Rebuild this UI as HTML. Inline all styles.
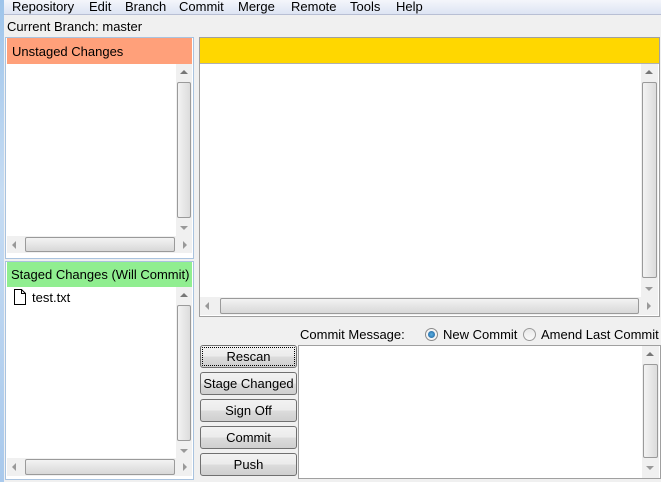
<!DOCTYPE html>
<html><head><style>
*{box-sizing:border-box;margin:0;padding:0}
body{width:661px;height:482px;background:#f0f0f0;font-family:"Liberation Sans","DejaVu Sans",sans-serif;font-size:13px;color:#000;position:relative;overflow:hidden}
.a{position:absolute}
.menu{left:4px;top:0;width:657px;height:15px;background:linear-gradient(#f4f6fb,#dde4f3);border-bottom:1px solid #b8bfd4}
.menu span{position:absolute;top:-1px}
.vs{background:#f0f0f0}
.thumbv{position:absolute;left:1px;right:1px;border:1px solid #9a9a9a;border-radius:2px;background:linear-gradient(90deg,#f3f3f3,#dcdcdc)}
.thumbh{position:absolute;top:1px;bottom:1px;border:1px solid #9a9a9a;border-radius:2px;background:linear-gradient(#f3f3f3,#d8d8d8)}
.arr{position:absolute;width:0;height:0}
.btn{position:absolute;left:200px;width:97px;height:23px;border:1px solid #707070;border-radius:3px;background:linear-gradient(#f2f2f2 0%,#ebebeb 50%,#dcdcdc 51%,#cfcfcf 100%);text-align:center;line-height:22px}
</style></head><body>
<div class="a" style="left:0;top:0;width:4px;height:482px;background:linear-gradient(#9ec4ea,#c6dcf3 40%,#a9c9ec)"></div>
<div class="a menu">
<span style="left:8px">Repository</span><span style="left:85px">Edit</span><span style="left:121px">Branch</span><span style="left:175px">Commit</span><span style="left:234px">Merge</span><span style="left:287px">Remote</span><span style="left:346px">Tools</span><span style="left:392px">Help</span>
</div>
<div class="a" style="left:7px;top:19px">Current Branch: master</div>

<div class="a" style="left:5px;top:37px;width:189px;height:222px;border:1px solid #a9c3df;background:#fff"></div>
<div class="a" style="left:7px;top:38px;width:185px;height:26px;background:#ffa07a;padding:6px 0 0 5px">Unstaged Changes</div>
<div class="a vs" style="left:176px;top:64px;width:16px;height:172px">
<div class="arr" style="left:4px;top:6px;border:4px solid transparent;border-bottom:4px solid #777;border-top:0"></div>
<div class="thumbv" style="top:18px;height:136px"></div>
<div class="arr" style="left:4px;top:162px;border:4px solid transparent;border-top:4px solid #999;border-bottom:0"></div>
</div>
<div class="a vs" style="left:7px;top:236px;width:185px;height:17px">
<div class="arr" style="left:5px;top:5px;border:4px solid transparent;border-right:4px solid #999;border-left:0"></div>
<div class="thumbh" style="left:18px;width:150px"></div>
<div class="arr" style="left:176px;top:5px;border:4px solid transparent;border-left:4px solid #999;border-right:0"></div>
</div>

<div class="a" style="left:5px;top:261px;width:189px;height:219px;border:1px solid #a9c3df;background:#fff"></div>
<div class="a" style="left:7px;top:262px;width:185px;height:25px;background:#90ee90;padding:5px 0 0 4px">Staged Changes (Will Commit)</div>
<svg class="a" style="left:13px;top:289px" width="14" height="16" viewBox="0 0 14 16"><path d="M1.5 .5h7l4 4v11h-11z M8.5 .5v4h4" fill="#fff" stroke="#000"/></svg>
<div class="a" style="left:32px;top:290px">test.txt</div>
<div class="a vs" style="left:176px;top:287px;width:16px;height:171px">
<div class="arr" style="left:4px;top:6px;border:4px solid transparent;border-bottom:4px solid #777;border-top:0"></div>
<div class="thumbv" style="top:18px;height:136px"></div>
<div class="arr" style="left:4px;top:162px;border:4px solid transparent;border-top:4px solid #999;border-bottom:0"></div>
</div>
<div class="a vs" style="left:7px;top:458px;width:185px;height:18px">
<div class="arr" style="left:5px;top:5px;border:4px solid transparent;border-right:4px solid #999;border-left:0"></div>
<div class="thumbh" style="left:18px;width:150px"></div>
<div class="arr" style="left:176px;top:5px;border:4px solid transparent;border-left:4px solid #999;border-right:0"></div>
</div>

<div class="a" style="left:199px;top:37px;width:461px;height:280px;border:1px solid #a0a0a0;background:#fff"></div>
<div class="a" style="left:200px;top:38px;width:459px;height:26px;background:#ffd700;border-bottom:1px solid #b0b0b0"></div>
<div class="a vs" style="left:641px;top:64px;width:17px;height:234px">
<div class="arr" style="left:4px;top:6px;border:4px solid transparent;border-bottom:4px solid #777;border-top:0"></div>
<div class="thumbv" style="top:18px;height:196px"></div>
<div class="arr" style="left:4px;top:223px;border:4px solid transparent;border-top:4px solid #999;border-bottom:0"></div>
</div>
<div class="a vs" style="left:200px;top:297px;width:441px;height:18px">
<div class="arr" style="left:5px;top:5px;border:4px solid transparent;border-right:4px solid #999;border-left:0"></div>
<div class="thumbh" style="left:20px;width:419px"></div>
</div>
<div class="a vs" style="left:641px;top:297px;width:17px;height:18px">
<div class="arr" style="left:6px;top:5px;border:4px solid transparent;border-left:4px solid #999;border-right:0"></div>
</div>

<div class="a" style="left:300px;top:327px">Commit Message:</div>
<div class="a" style="left:425px;top:328px;width:13px;height:13px;border-radius:50%;border:1px solid #8a8a8a;background:#f4f4f4"><div style="position:absolute;left:2px;top:2px;width:7px;height:7px;border-radius:50%;background:radial-gradient(#5ab0e0,#1a5b9a)"></div></div>
<div class="a" style="left:443px;top:327px">New Commit</div>
<div class="a" style="left:523px;top:328px;width:13px;height:13px;border-radius:50%;border:1px solid #9a9a9a;background:linear-gradient(#e8e8e8,#fafafa)"></div>
<div class="a" style="left:541px;top:327px">Amend Last Commit</div>

<div class="a" style="left:298px;top:345px;width:363px;height:134px;border:1px solid #a0a0a0;background:#fff"></div>
<div class="a vs" style="left:642px;top:346px;width:17px;height:132px">
<div class="arr" style="left:4px;top:6px;border:4px solid transparent;border-bottom:4px solid #777;border-top:0"></div>
<div class="thumbv" style="top:18px;height:94px"></div>
<div class="arr" style="left:4px;top:120px;border:4px solid transparent;border-top:4px solid #999;border-bottom:0"></div>
</div>

<div class="btn" style="top:345px;outline:1px dotted #000;outline-offset:-3px">Rescan</div>
<div class="btn" style="top:372px">Stage Changed</div>
<div class="btn" style="top:399px">Sign Off</div>
<div class="btn" style="top:426px">Commit</div>
<div class="btn" style="top:453px">Push</div>
</body></html>
